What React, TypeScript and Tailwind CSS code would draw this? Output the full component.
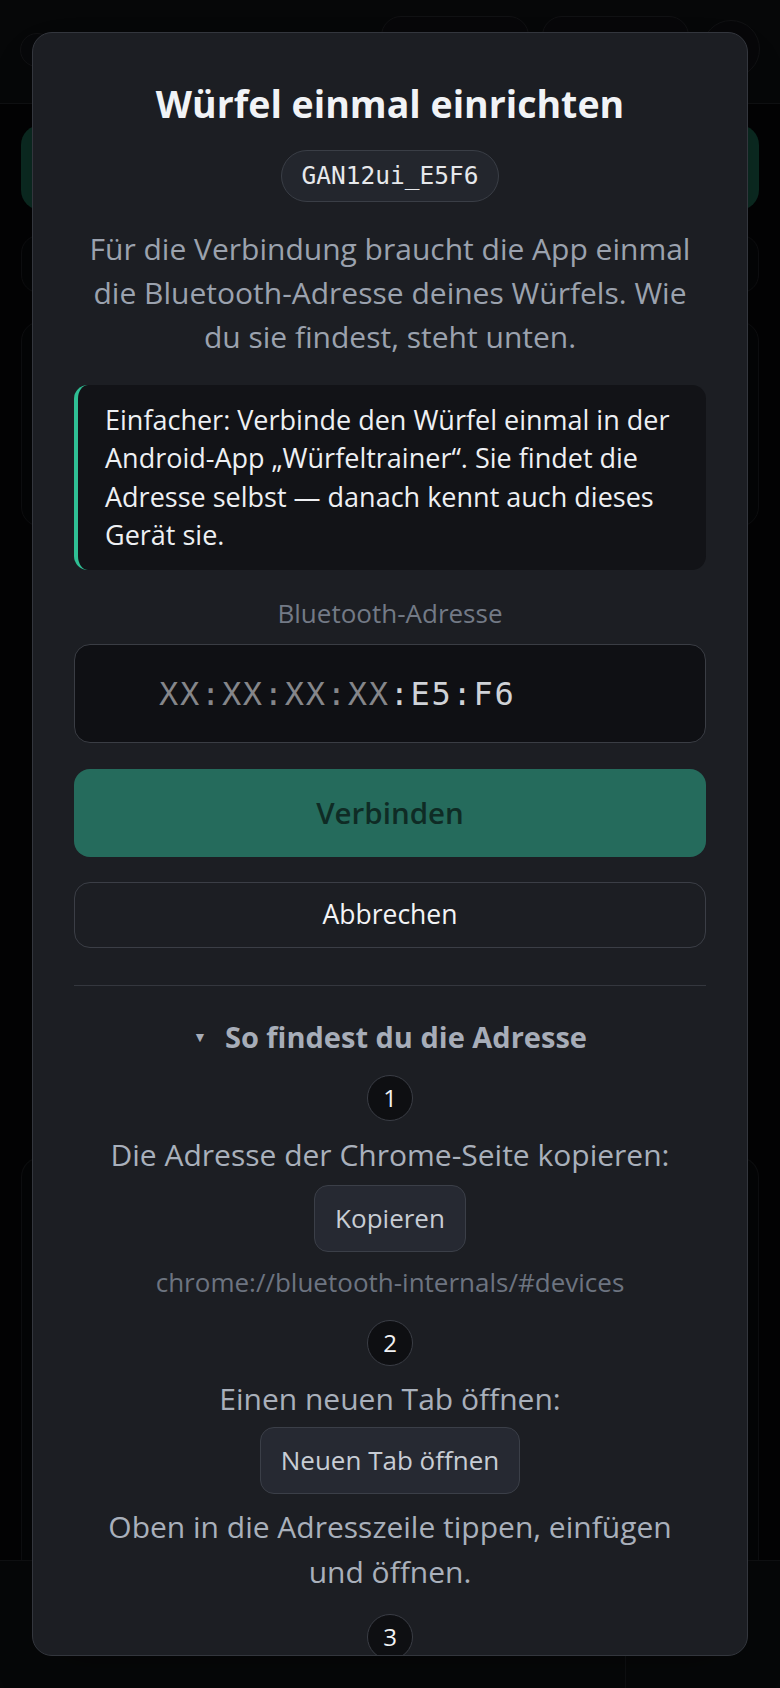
import type { ReactNode } from 'react';

const sans = { fontFamily: '"Open Sans", "Noto Sans", sans-serif' };
const mono = { fontFamily: '"DejaVu Sans Mono", "Liberation Mono", monospace' };

// Round step marker used in the address guide
function StepBadge({ n }: { n: number }) {
  return (
    <div className="mx-auto flex h-[46px] w-[46px] shrink-0 items-center justify-center rounded-full border border-[#3a3d45] bg-[#0e0f12] text-[24px] leading-none text-[#f1f2f4]">
      {n}
    </div>
  );
}

function GuideButton({ children }: { children: ReactNode }) {
  return (
    <button className="mx-auto flex h-[67px] items-center justify-center rounded-[14px] border border-[#3b3f48] bg-[#262932] px-[20px] text-[26px] text-[#c8cdd5]">
      {children}
    </button>
  );
}

// Dimmed main screen behind the dialog
function Backdrop() {
  return (
    <div className="flex h-full flex-col bg-[#050607]">
      <header className="flex h-[104px] shrink-0 items-start border-b border-[#1a1b1e] bg-[#0b0c0e] px-[20px] pt-[16px]">
        <div className="mt-[17px] h-[34px] w-[34px] rounded-full border border-[#1c1d20] bg-[#0d0e11]" />
        <div className="ml-auto flex gap-[13px]">
          <div className="h-[64px] w-[148px] rounded-[20px] border border-[#1c1d20] bg-[#0c0d10]" />
          <div className="h-[64px] w-[147px] rounded-[20px] border border-[#1c1d20] bg-[#0c0d10]" />
          <div className="mt-[4px] h-[58px] w-[58px] rounded-full border border-[#1c1d20] bg-[#0c0d10]" />
        </div>
      </header>
      <main className="flex flex-1 flex-col px-[21px] pt-[21px]">
        <div className="h-[85px] rounded-[20px] bg-[#134637]" />
        <div className="mt-[25px] h-[58px] rounded-[18px] border border-[#17181b] bg-[#08090b]" />
        <div className="mt-[28px] h-[206px] rounded-[20px] border border-[#17181b] bg-[#08090b]" />
        <div className="mt-[630px] flex-1 rounded-t-[20px] border border-b-0 border-[#17181b] bg-[#08090b]" />
      </main>
      <nav className="flex h-[128px] shrink-0 border-t border-[#1a1b1e] bg-[#0b0c0e]">
        <div className="flex-1" />
        <div className="w-[155px] border-l border-[#1a1b1e]" />
      </nav>
    </div>
  );
}

export default function App() {
  return (
    <div className="relative h-[1688px] w-full overflow-hidden" style={sans}>
      <Backdrop />
      <div className="absolute inset-0 bg-black/40 px-[32px] py-[32px]">
        <div className="h-full overflow-hidden rounded-[20px] border border-[#33363d] bg-[#1c1e23] px-[41px] pt-[47px] shadow-2xl">
          <h1 className="text-center text-[37.5px] font-bold leading-[48px] text-[#f1f3f6]">Würfel einmal einrichten</h1>

          <div className="mt-[22px] flex justify-center">
            <span
              className="flex h-[52px] items-center rounded-full border border-[#3a3e46] bg-[#23262d] px-[19px] text-[24.5px] text-[#e6e8eb]"
              style={mono}
            >
              GAN12ui_E5F6
            </span>
          </div>

          <p className="mt-[25px] px-[6px] text-center text-[30px] leading-[44px] text-[#9ba2ae]">
            Für die Verbindung braucht die App einmal die Bluetooth-Adresse deines Würfels. Wie du sie findest, steht unten.
          </p>

          <div className="mt-[26px] rounded-[14px] border-l-4 border-[#2fbf94] bg-[#121317] py-[16px] pl-[27px] pr-[14px] text-[27px] leading-[38.3px] text-[#eef0f3]">
            Einfacher: Verbinde den Würfel einmal in der Android-App „Würfeltrainer“. Sie findet die Adresse selbst — danach kennt auch dieses Gerät sie.
          </div>

          <div className="mt-[24px] text-center text-[26px] leading-[38px] text-[#737a86]">Bluetooth-Adresse</div>

          <div className="mt-[12px] flex h-[99px] items-center rounded-[16px] border border-[#3a3d44] bg-[#0f1014] pl-[84px] text-[32px] tracking-[1.7px]" style={mono}>
            <span className="text-[#85868a]">XX:XX:XX:XX</span>
            <span className="text-[#cfd2d7]">:E5:F6</span>
          </div>

          <button className="mt-[26px] flex h-[88px] w-full items-center justify-center rounded-[16px] bg-[#256b5c] text-[29.5px] font-semibold text-[#0f2b25]">
            Verbinden
          </button>

          <button className="mt-[25px] flex h-[66px] w-full items-center justify-center rounded-[16px] border border-[#3b3e46] text-[26.5px] text-[#f3f4f6]">
            Abbrechen
          </button>

          <div className="mt-[37px] h-px bg-[#34373e]" />

          <div className="mt-[33px] flex items-center justify-center gap-[18px] text-[29px] font-bold leading-[36px] text-[#a7adb8]">
            <span className="text-[14px]">▼</span>
            <span>So findest du die Adresse</span>
          </div>

          <div className="mt-[20px] flex flex-col items-center text-center">
            <StepBadge n={1} />
            <p className="mt-[11px] text-[30px] leading-[45px] text-[#a9b0bb]">Die Adresse der Chrome-Seite kopieren:</p>
            <div className="mt-[8px]">
              <GuideButton>Kopieren</GuideButton>
            </div>
            <p className="mt-[11px] text-[26px] leading-[38px] text-[#6d7480]">chrome://bluetooth-internals/#devices</p>

            <div className="mt-[19px]">
              <StepBadge n={2} />
            </div>
            <p className="mt-[10px] text-[30px] leading-[45px] text-[#a9b0bb]">Einen neuen Tab öffnen:</p>
            <div className="mt-[6px]">
              <GuideButton>Neuen Tab öffnen</GuideButton>
            </div>
            <p className="mt-[10px] px-[20px] text-[30px] leading-[45px] text-[#a9b0bb]">
              Oben in die Adresszeile tippen, einfügen und öffnen.
            </p>

            <div className="mt-[20px]">
              <StepBadge n={3} />
            </div>
          </div>
        </div>
      </div>
    </div>
  );
}
